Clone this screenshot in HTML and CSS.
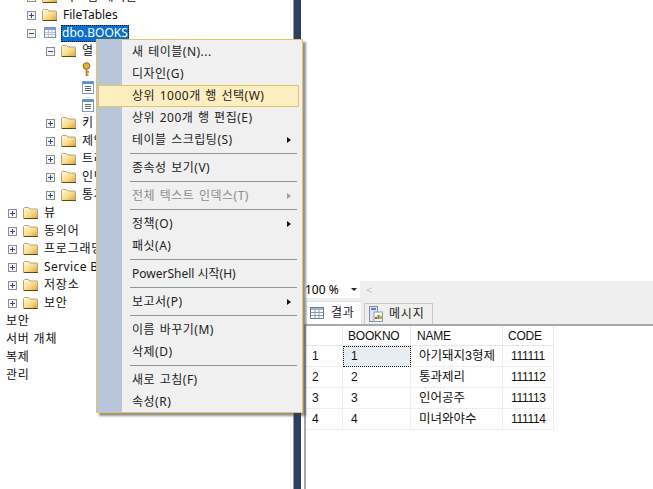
FILE: index.html
```html
<!DOCTYPE html>
<html lang="ko">
<head>
<meta charset="utf-8">
<title>SSMS</title>
<link rel="stylesheet" href="styles.css">
</head>
<body>
<svg width="0" height="0" class="defs">
  <defs>
    <linearGradient id="fg" x1="0" y1="0" x2="1" y2="1"><stop offset="0" stop-color="#fffbe6"/><stop offset=".55" stop-color="#f8da85"/><stop offset="1" stop-color="#d9a02c"/></linearGradient>
    <symbol id="folder" viewBox="0 0 15 12"><path d="M.5 11.500V1.500l1-1h4l1.500 1.500h7l.5.5v9.500z" fill="url(#fg)" stroke="#b3a67e"/><path d="M1 11.500h14" stroke="#5c4a1a"/></symbol>
    <symbol id="plus" viewBox="0 0 9 9"><rect x=".5" y=".5" width="8" height="8" fill="#f4f4f4" stroke="#8f8f8f"/><path d="M2 4.500h5M4.500 2v5" stroke="#2f4a8c"/></symbol>
    <symbol id="minus" viewBox="0 0 9 9"><rect x=".5" y=".5" width="8" height="8" fill="#f4f4f4" stroke="#8f8f8f"/><path d="M2 4.500h5" stroke="#2f4a8c"/></symbol>
    <symbol id="col" viewBox="0 0 12 13"><rect x=".5" y=".5" width="11" height="12" fill="#fff" stroke="#7a9ccc"/><rect x="1" y="1" width="10" height="2" fill="#5f8fd0"/><path d="M3 5.500h6M3 7.500h6M3 9.500h6" stroke="#666"/></symbol>
    <symbol id="tbl" viewBox="0 0 12 11"><rect x=".5" y=".5" width="11" height="10" fill="#fff" stroke="#7d93b8"/><rect x="1" y="1" width="10" height="2" fill="#7f9bd0"/><path d="M1 5.500h10M1 7.500h10M4.500 3v7M8 3v7" stroke="#b9c3d4"/></symbol>
  </defs>
</svg>
<div class="app">
  <div class="tree">
    <div class="row row-top i1"><svg class="exp"><use href="#plus"/></svg><svg class="fold"><use href="#folder"/></svg><span>시스템 테이블</span></div>
    <div class="row i1"><svg class="exp"><use href="#plus"/></svg><svg class="fold"><use href="#folder"/></svg><span class="lat">FileTables</span></div>
    <div class="row i1"><svg class="exp"><use href="#minus"/></svg><svg class="tblic"><use href="#tbl"/></svg><span class="lat sel">dbo.BOOKS</span></div>
    <div class="row i2"><svg class="exp"><use href="#minus"/></svg><svg class="fold"><use href="#folder"/></svg><span>열</span></div>
    <div class="row i3"><svg class="key" viewBox="0 0 9 15"><circle cx="4.500" cy="4" r="3.300" fill="#e2b33c" stroke="#8a6414"/><path d="M4.500 7v7M4.500 10h2.500M4.500 13h2" stroke="#a87a1c" stroke-width="1.600" fill="none"/></svg></div>
    <div class="row i3"><svg class="colic"><use href="#col"/></svg></div>
    <div class="row i3"><svg class="colic"><use href="#col"/></svg></div>
    <div class="row i2"><svg class="exp"><use href="#plus"/></svg><svg class="fold"><use href="#folder"/></svg><span>키</span></div>
    <div class="row i2"><svg class="exp"><use href="#plus"/></svg><svg class="fold"><use href="#folder"/></svg><span>제약 조건</span></div>
    <div class="row i2"><svg class="exp"><use href="#plus"/></svg><svg class="fold"><use href="#folder"/></svg><span>트리거</span></div>
    <div class="row i2"><svg class="exp"><use href="#plus"/></svg><svg class="fold"><use href="#folder"/></svg><span>인덱스</span></div>
    <div class="row i2"><svg class="exp"><use href="#plus"/></svg><svg class="fold"><use href="#folder"/></svg><span>통계</span></div>
    <div class="row i0"><svg class="exp"><use href="#plus"/></svg><svg class="fold"><use href="#folder"/></svg><span>뷰</span></div>
    <div class="row i0"><svg class="exp"><use href="#plus"/></svg><svg class="fold"><use href="#folder"/></svg><span>동의어</span></div>
    <div class="row i0"><svg class="exp"><use href="#plus"/></svg><svg class="fold"><use href="#folder"/></svg><span>프로그래밍 기능</span></div>
    <div class="row i0"><svg class="exp"><use href="#plus"/></svg><svg class="fold"><use href="#folder"/></svg><span class="lat wide">Service Broker</span></div>
    <div class="row i0"><svg class="exp"><use href="#plus"/></svg><svg class="fold"><use href="#folder"/></svg><span>저장소</span></div>
    <div class="row i0"><svg class="exp"><use href="#plus"/></svg><svg class="fold"><use href="#folder"/></svg><span>보안</span></div>
    <div class="row"><span>보안</span></div>
    <div class="row"><span>서버 개체</span></div>
    <div class="row"><span>복제</span></div>
    <div class="row"><span>관리</span></div>
  </div>
  <div class="splitter"></div>
  <div class="right">
    <div class="editor"></div>
    <div class="strip">
      <div class="zoombar">
        <div class="zoombox"><span>100 %</span><i class="caret"></i></div>
        <span class="chev">&lt;</span>
      </div>
      <div class="tabs">
        <div class="tab active"><svg class="tabic" viewBox="0 0 14 12"><rect x=".5" y=".5" width="13" height="11" fill="#fff" stroke="#6d7f98"/><rect x="1" y="1" width="12" height="2" fill="#9fb4d4"/><path d="M1 5.500h12M1 8.500h12M5 3v8M9 3v8" stroke="#8d9cb4"/></svg><span>결과</span></div>
        <div class="tab"><svg class="tabic msg" viewBox="0 0 14 16"><rect x=".5" y=".5" width="8" height="15" fill="#dfe6f2" stroke="#7d8aa8"/><rect x="2" y="2" width="5" height="2" fill="#5f7fc0"/><rect x="5" y="6" width="8.500" height="9.500" fill="#f6f6f6" stroke="#9a9a9a"/><path d="M7 13v-2" stroke="#d04030" stroke-width="2"/><path d="M9.500 13V9" stroke="#3a9a40" stroke-width="2"/><path d="M12 13v-3" stroke="#e0a020" stroke-width="2"/></svg><span>메시지</span></div>
      </div>
    </div>
    <div class="gridwrap">
      <div class="grid">
        <div class="c h"></div><div class="c h">BOOKNO</div><div class="c h name">NAME</div><div class="c h">CODE</div>
        <div class="c n">1</div><div class="c v current">1</div><div class="c t">아기돼지3형제</div><div class="c d">111111</div>
        <div class="c n">2</div><div class="c v">2</div><div class="c t">통과제리</div><div class="c d">111112</div>
        <div class="c n">3</div><div class="c v">3</div><div class="c t">인어공주</div><div class="c d">111113</div>
        <div class="c n">4</div><div class="c v">4</div><div class="c t">미녀와야수</div><div class="c d">111114</div>
      </div>
    </div>
  </div>
</div>
<div class="menu">
  <div class="mi">새 테이블(N)...</div>
  <div class="mi">디자인(G)</div>
  <div class="mi hot">상위 1000개 행 선택(W)</div>
  <div class="mi">상위 200개 행 편집(E)</div>
  <div class="mi sub">테이블 스크립팅(S)</div>
  <div class="sep"></div>
  <div class="mi">종속성 보기(V)</div>
  <div class="sep"></div>
  <div class="mi sub off">전체 텍스트 인덱스(T)</div>
  <div class="sep"></div>
  <div class="mi sub">정책(O)</div>
  <div class="mi">패싯(A)</div>
  <div class="sep"></div>
  <div class="mi lat">PowerShell 시작(H)</div>
  <div class="sep"></div>
  <div class="mi sub">보고서(P)</div>
  <div class="sep"></div>
  <div class="mi">이름 바꾸기(M)</div>
  <div class="mi">삭제(D)</div>
  <div class="sep"></div>
  <div class="mi">새로 고침(F)</div>
  <div class="mi">속성(R)</div>
</div>
</body>
</html>
```
FILE: styles.css
```css
* { box-sizing: border-box; }
html, body { margin: 0; height: 100%; overflow: hidden; background: #fff; }
body { font: 12px/18px "Noto Sans", "Noto Sans CJK KR", sans-serif; color: #111; position: relative; }
.defs { position: absolute; }
.app { display: grid; grid-template-columns: 293px 8px 1fr; height: 489px; }
.tree { overflow: hidden; white-space: nowrap; }
.row { height: 18px; display: flex; align-items: center; padding-left: 6px; letter-spacing: .8px; }
.row-top { margin-top: -12px; }
.i0 { padding-left: 8px; }
.i1 { padding-left: 27px; }
.i2 { padding-left: 46px; }
.i3 { padding-left: 82px; }
.exp { width: 9px; height: 9px; flex: none; margin-right: 6px; }
.fold { width: 15px; height: 12px; flex: none; margin-right: 6px; }
.tblic { width: 12px; height: 11px; flex: none; margin: 0 6px 2px 2px; }
.colic { width: 12px; height: 13px; }
.key { width: 9px; height: 15px; }
.lat { letter-spacing: 0; }
.wide { letter-spacing: .4px; }
.sel { background: #0a6fcf; color: #fff; outline: 1px dotted #111; outline-offset: -1px; padding: 0 1px; height: 17px; line-height: 16px; margin-left: -1px; }
.splitter { background: #2d3f60; border-left: 1px solid #9a9a9a; }
.right { display: flex; flex-direction: column; padding-left: 3px; min-width: 0; }
.editor { height: 281px; background: #fff; flex: none; }
.strip { height: 45px; background: #efefef; flex: none; border-bottom: 2px solid #a9a9a9; }
.zoombar { display: flex; align-items: center; height: 17px; }
.zoombox { width: 56px; height: 17px; background: #fff; display: flex; align-items: center; justify-content: space-between; padding: 0 3px 0 1px; line-height: 17px; color: #000; }
.caret { width: 0; height: 0; border: 3px solid transparent; border-top: 3px solid #222; border-bottom: 0; }
.chev { margin-left: 6px; color: #c4c4c4; font-size: 11px; }
.tabs { display: flex; align-items: flex-end; height: 24px; padding-left: 2px; margin-top: 2px; gap: 2px; }
.tab { height: 21px; display: flex; align-items: center; gap: 6px; padding: 0 7px 0 4px; border: 1px solid #c8c8c8; border-bottom: 0; color: #222; letter-spacing: .8px; white-space: nowrap; }
.tab.active { height: 23px; width: 56px; background: #fff; border-color: #e4e4e4; padding: 0 0 0 3px; gap: 7px; }
.tabic { width: 14px; height: 12px; flex: none; }
.msg { width: 14px; height: 16px; }
.gridwrap { flex: 1; border-left: 2px solid #a8a8a8; background: #fff; }
.grid { display: grid; grid-template-columns: 37px 68px 92px 51px; grid-template-rows: 20px repeat(4, 21px); width: max-content; font-family: "Liberation Sans", "Noto Sans CJK KR", sans-serif; font-size: 12px; letter-spacing: -.2px; color: #111; }
.c { border-right: 1px solid #efefef; border-bottom: 1px solid #efefef; line-height: 20px; }
.h { padding-left: 5px; border-color: #e8e8e8; }
.h.name { padding-left: 6px; }
.n { padding-left: 6px; }
.v { padding-left: 8px; }
.current { background: #e8edf2; outline: 1px dotted #111; outline-offset: -1px; }
.t { padding-left: 8px; font-size: 12.500px; letter-spacing: 0; }
.d { padding-left: 8px; letter-spacing: -.3px; }
.menu { position: absolute; left: 96px; top: 39px; width: 207px; height: 374px; padding: 1px; background: linear-gradient(90deg, #b9c5d8 25px, #f0f0f0 25px); border: 1px solid #e5c365; box-shadow: 3px 3px 2px rgba(60,60,60,.55); }
.mi { height: 22px; line-height: 21px; padding-left: 34px; position: relative; color: #222; white-space: nowrap; letter-spacing: .5px; word-spacing: 1px; }
.mi.lat { letter-spacing: 0; word-spacing: 0; }
.mi.hot { background: #fdeebf; outline: 1px solid #e5c365; outline-offset: -1px; width: 201px; }
.mi.off { color: #8d8d8d; }
.sub::after { content: ""; position: absolute; right: 10px; top: 8px; border: 3.500px solid transparent; border-left: 4px solid #111; border-right: 0; }
.off::after { border-left-color: #a0a0a0; }
.sep { height: 6px; margin-left: 32px; margin-right: 4px; position: relative; }
.sep::after { content: ""; position: absolute; left: 0; right: 0; top: 2px; height: 1px; background: #8d949e; }
```
